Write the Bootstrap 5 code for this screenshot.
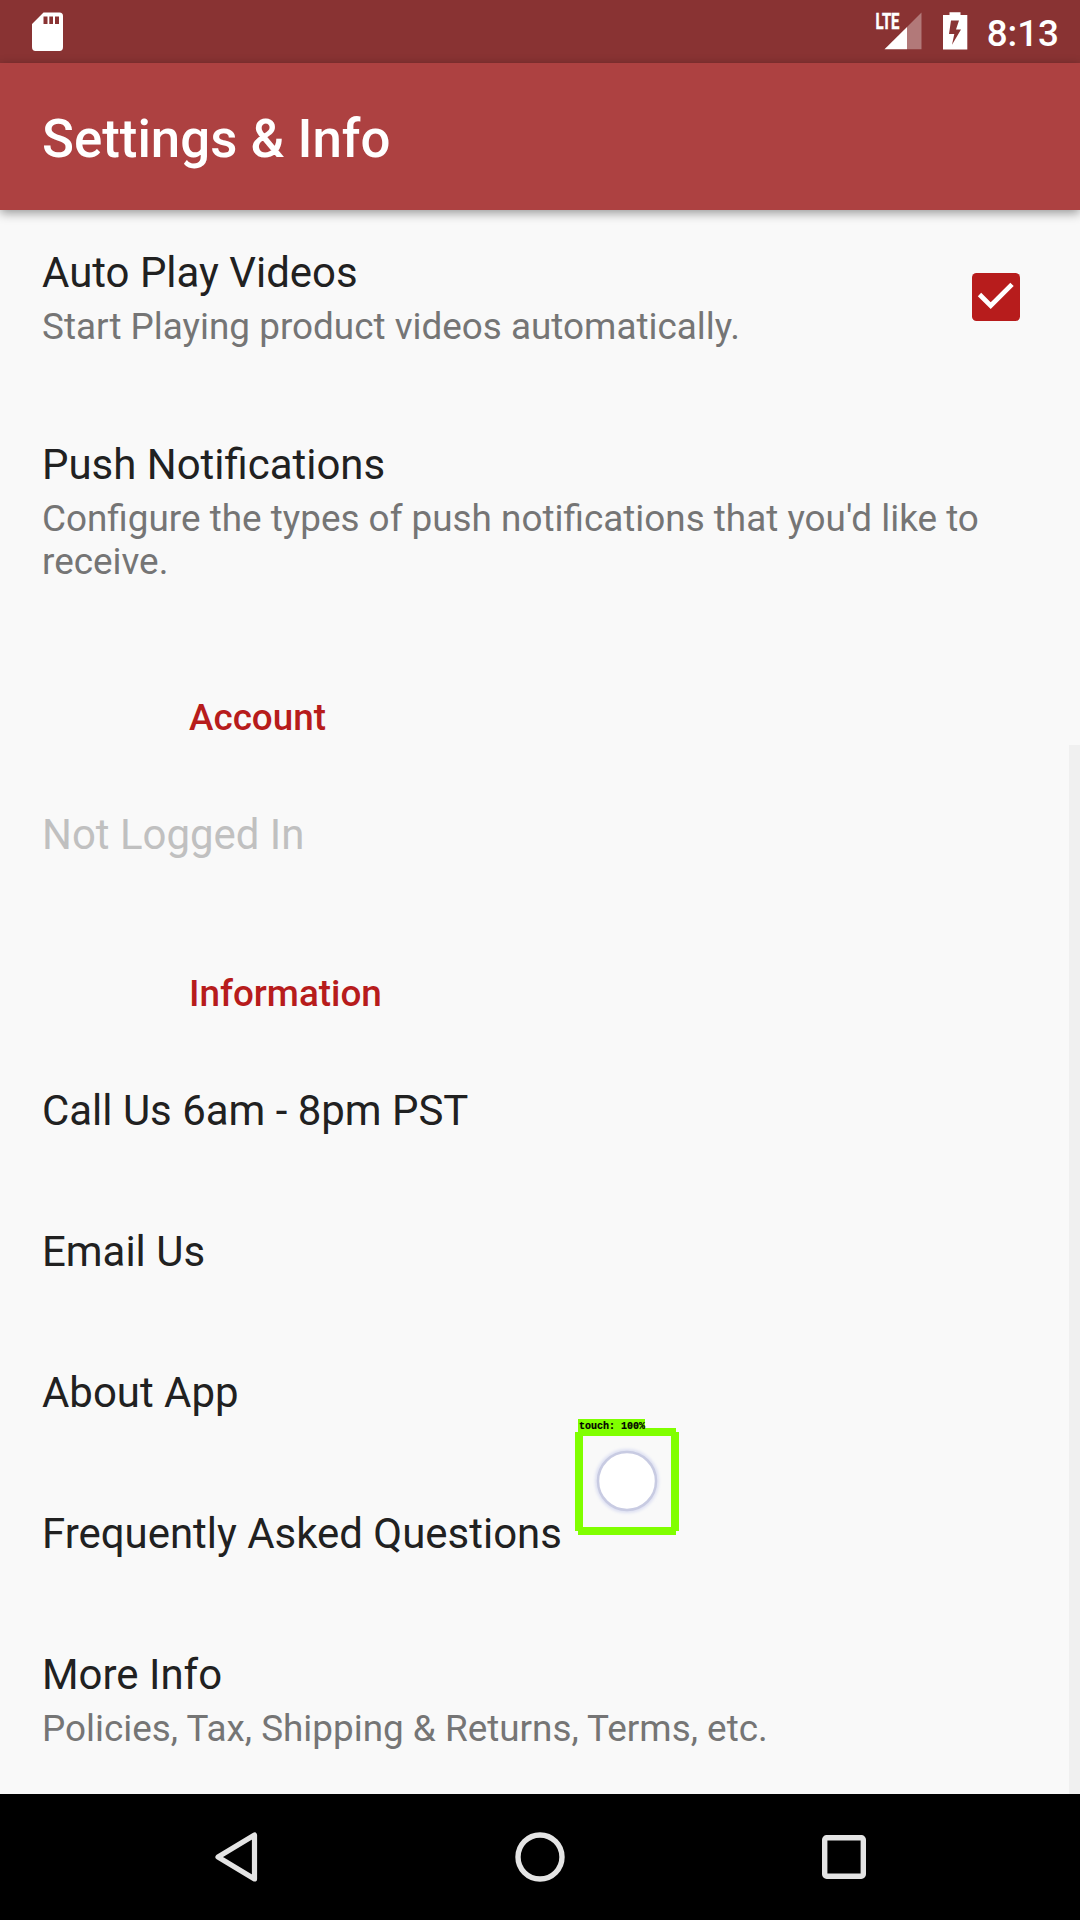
<!DOCTYPE html>
<html lang="en">
<head>
<meta charset="utf-8">
<meta name="viewport" content="width=device-width, initial-scale=1">
<title>Settings &amp; Info</title>
<link href="https://cdn.jsdelivr.net/npm/bootstrap@5.3.0/dist/css/bootstrap.min.css" rel="stylesheet">
<style>
body { font-family: Roboto, sans-serif; background: #f9f9f9; color: #212121; }
.screen { width: 1080px; height: 1920px; }
.status-bar { height: 63px; background: #893333; padding: 0 21px 0 32px; }
.clock { font-size: 36.75px; font-weight: 500; line-height: 43px; margin-top: 3px; }
.app-bar { height: 147px; background: #ad4141; padding: 5px 42px 0; box-shadow: 0 3px 10px rgba(0,0,0,.4); z-index: 2; }
.app-title { font-size: 52.8px; font-weight: 500; line-height: 62px; }
.prefs { margin-top: -8px; z-index: 1; }
.pref { padding: 42px; background: transparent; color: inherit; line-height: 57px; font-size: 41.95px; }
.pref-sum { font-size: 36.87px; line-height: 43px; color: #757575; padding: 4px 0; }
.pref-off { color: #c0c0c0; }
.pref-head { padding: 67px 42px 25px 189px; font-size: 36.85px; font-weight: 500; line-height: 43px; color: #b71c1c; }
.tick { margin: 0 18px 3px 0; }
.thumb { right: 0; top: 543px; width: 11px; bottom: 0; background: #f0f0f0; }
.touch { left: 575px; top: 1217px; width: 104px; height: 117px; }
.nav-keys { height: 126px; z-index: 3; padding: 0 214px 0 215px; }
</style>
</head>
<body>
<div class="screen d-flex flex-column overflow-hidden">
  <header class="status-bar d-flex align-items-center justify-content-between text-white flex-shrink-0">
    <svg width="31" height="63" viewBox="32 0 31 63"><path fill="#fff" fill-rule="evenodd" d="M43.500 12.500H59.500Q63 12.500 63 16V47Q63 51 59.500 51H35.500Q32 51 32 47V24ZM43.500 16.500V24H47.500V16.500ZM49.300 16.500V24H53V16.500ZM55 16.500V24H59V16.500Z"/></svg>
    <div class="d-flex align-items-center">
      <svg width="112" height="63" viewBox="875 0 112 63">
        <text transform="translate(875.500 29.300) scale(.66 1)" font-family="Roboto, sans-serif" font-weight="700" font-size="22.500" fill="#fff" stroke="#fff" stroke-width=".5">LTE</text>
        <path fill="#fff" d="M884.500 49.300L907 27V49.300Z"/>
        <path fill="#b27979" d="M907 27L921.500 12.500V49.300H907Z"/>
        <path fill="#fff" fill-rule="evenodd" d="M949.500 15V12.300H960.500V15H967.300V49.500H943V15ZM951 20.500L949 34H954.300L952 44.800L961 29.500H956L959 20.500Z"/>
      </svg>
      <span class="clock">8:13</span>
    </div>
  </header>
  <nav class="app-bar d-flex align-items-center text-white position-relative flex-shrink-0">
    <span class="app-title">Settings &amp; Info</span>
  </nav>
  <main class="prefs flex-grow-1 position-relative" style="min-height:0">
    <div class="list-group list-group-flush h-100 overflow-hidden">
      <div class="pref d-flex align-items-center justify-content-between">
        <div><div>Auto Play Videos</div><div class="pref-sum">Start Playing product videos automatically.</div></div>
        <svg class="tick" width="48" height="48" viewBox="0 0 48 48"><rect width="48" height="48" rx="4.500" fill="#b71c1c"/><path d="M7.500 21.500L18.700 32.700L40 11.400" fill="none" stroke="#fff" stroke-width="4.800"/></svg>
      </div>
      <div class="pref"><div>Push Notifications</div><div class="pref-sum">Configure the types of push notifications that you'd like to receive.</div></div>
      <div class="pref-head">Account</div>
      <div class="pref pref-off">Not Logged In</div>
      <div class="pref-head">Information</div>
      <div class="pref">Call Us 6am - 8pm PST</div>
      <div class="pref">Email Us</div>
      <div class="pref">About App</div>
      <div class="pref">Frequently Asked Questions</div>
      <div class="pref"><div>More Info</div><div class="pref-sum">Policies, Tax, Shipping &amp; Returns, Terms, etc.</div></div>
    </div>
    <div class="thumb position-absolute"></div>
    <svg class="touch position-absolute" viewBox="575 1419 104 117">
      <defs><filter id="soft" x="-20%" y="-20%" width="140%" height="140%"><feGaussianBlur stdDeviation="1.800"/></filter></defs>
      <circle cx="627" cy="1481" r="30" fill="none" stroke="#dcdff2" stroke-width="4" filter="url(#soft)"/>
      <circle cx="627" cy="1481" r="29" fill="#fff" stroke="#c8cbe2" stroke-width="2.500"/>
      <path fill="#80ff00" fill-rule="evenodd" d="M578 1419H645V1428H676V1432H679V1531H676V1535H578V1531H575V1432H578ZM583 1436V1527H671V1436Z"/>
      <text x="579" y="1429" font-family="Liberation Mono, monospace" font-weight="700" font-size="10" fill="#000" stroke="#000" stroke-width=".2">touch: 100%</text>
    </svg>
  </main>
  <footer class="nav-keys bg-black d-flex align-items-center justify-content-between flex-shrink-0">
    <svg width="43" height="52" viewBox="0 0 43 52"><path d="M3 26L39.500 4V48Z" fill="none" stroke="#e4e4e4" stroke-width="5.200" stroke-linejoin="round"/></svg>
    <svg width="50" height="50" viewBox="0 0 50 50"><circle cx="25" cy="25" r="22" fill="none" stroke="#e4e4e4" stroke-width="5.400"/></svg>
    <svg width="44" height="44" viewBox="0 0 44 44"><rect x="2.700" y="2.700" width="38.600" height="38.600" rx="2" fill="none" stroke="#e4e4e4" stroke-width="5.400"/></svg>
  </footer>
</div>
<script src="https://cdn.jsdelivr.net/npm/bootstrap@5.3.0/dist/js/bootstrap.bundle.min.js"></script>
</body>
</html>
